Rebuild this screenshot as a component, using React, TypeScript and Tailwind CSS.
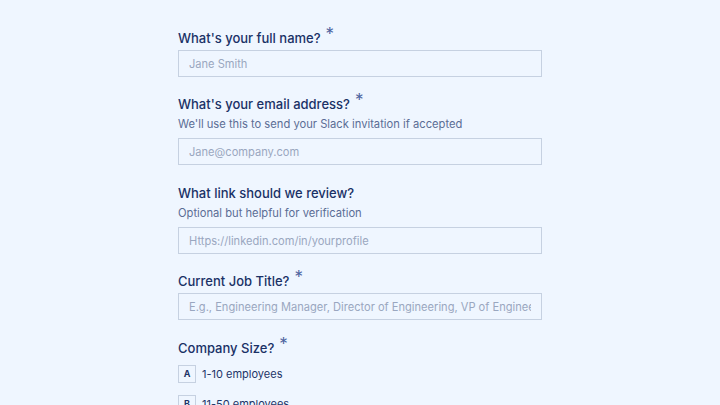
const labelCls = "h-[20px] text-[13px] leading-[23px] font-medium text-[#1a3166]"
const descCls = "mt-[2px] h-[18px] text-[11.2px] leading-[18px] text-[#5b6d95]"
const inputCls =
  "block w-full h-[27px] border border-[#c6d1e1] bg-[#eff6ff] px-[10px] text-[11.1px] text-[#1d3468] placeholder:text-[#9aa7c0] outline-none"

function Label({ text, required }: { text: string; required?: boolean }) {
  return (
    <div className={labelCls}>
      {text}
      {required && (
        <span className="relative -top-[3px] ml-[5px] inline-block leading-none text-[17px] font-normal text-[#4d64a0]">*</span>
      )}
    </div>
  )
}

function Field({
  label,
  desc,
  placeholder,
  required,
  gap,
}: {
  label: string
  desc?: string
  placeholder: string
  required?: boolean
  gap: string
}) {
  return (
    <div className={gap}>
      <Label text={label} required={required} />
      {desc && <div className={descCls}>{desc}</div>}
      <input className={`${inputCls} ${desc ? "mt-[5px]" : "mt-[3px]"}`} placeholder={placeholder} />
    </div>
  )
}

export default function App() {
  return (
    <div className="h-[405px] overflow-hidden bg-[#eff6ff] font-['Inter',sans-serif]">
      <div className="ml-[178px] w-[364px] pt-[27px]">
        <Field label="What's your full name?" placeholder="Jane Smith" required gap="mb-[16px]" />
        <Field
          label="What's your email address?"
          desc="We'll use this to send your Slack invitation if accepted"
          placeholder="Jane@company.com"
          required
          gap="mb-[17px]"
        />
        <Field
          label="What link should we review?"
          desc="Optional but helpful for verification"
          placeholder="Https://linkedin.com/in/yourprofile"
          gap="mb-[16px]"
        />
        <Field
          label="Current Job Title?"
          placeholder="E.g., Engineering Manager, Director of Engineering, VP of Engineering"
          required
          gap="mb-[17px]"
        />
        <div>
          <Label text="Company Size?" required />
          <div className="mt-[8px] flex flex-col gap-[12px]">
            {[
              ["A", "1-10 employees"],
              ["B", "11-50 employees"],
            ].map(([k, t]) => (
              <div key={k} className="flex h-[18px] items-center gap-[6px]">
                <span className="flex h-[18px] w-[18px] items-center justify-center border border-[#c6d1e1] text-[9px] font-bold text-[#1d3468]">
                  {k}
                </span>
                <span className="text-[11px] text-[#1d3468]">{t}</span>
              </div>
            ))}
          </div>
        </div>
      </div>
    </div>
  )
}
